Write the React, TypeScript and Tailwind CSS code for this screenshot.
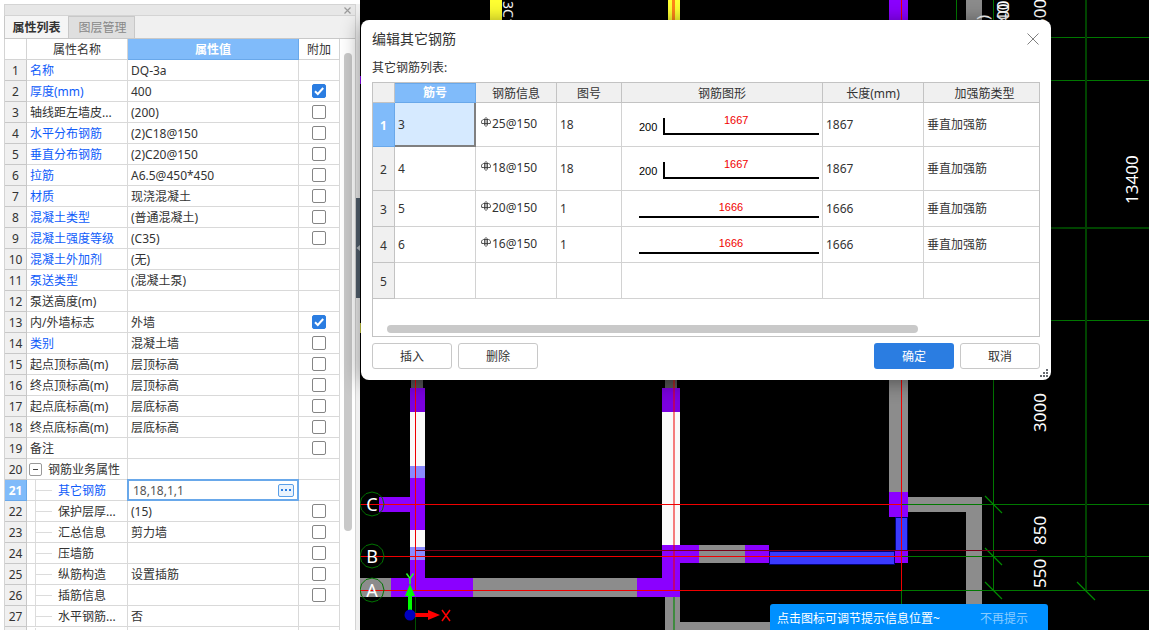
import React, { useState } from "react";

interface PropertyRow {
  name: string;
  value: string;
  blue?: boolean;
  check?: boolean;
  kind?: "group" | "child";
}

interface RebarRow {
  no: string;
  info: string;
  figure: string;
  bar?: number;
  hook?: number;
  length: string;
  type: string;
}

const properties: PropertyRow[] = [
  { name: "名称", value: "DQ-3a", blue: true },
  { name: "厚度(mm)", value: "400", blue: true, check: true },
  { name: "轴线距左墙皮...", value: "(200)", check: false },
  { name: "水平分布钢筋", value: "(2)C18@150", blue: true, check: false },
  { name: "垂直分布钢筋", value: "(2)C20@150", blue: true, check: false },
  { name: "拉筋", value: "A6.5@450*450", blue: true, check: false },
  { name: "材质", value: "现浇混凝土", blue: true, check: false },
  { name: "混凝土类型", value: "(普通混凝土)", blue: true, check: false },
  { name: "混凝土强度等级", value: "(C35)", blue: true, check: false },
  { name: "混凝土外加剂", value: "(无)", blue: true },
  { name: "泵送类型", value: "(混凝土泵)", blue: true },
  { name: "泵送高度(m)", value: "" },
  { name: "内/外墙标志", value: "外墙", check: true },
  { name: "类别", value: "混凝土墙", blue: true, check: false },
  { name: "起点顶标高(m)", value: "层顶标高", check: false },
  { name: "终点顶标高(m)", value: "层顶标高", check: false },
  { name: "起点底标高(m)", value: "层底标高", check: false },
  { name: "终点底标高(m)", value: "层底标高", check: false },
  { name: "备注", value: "", check: false },
  { name: "钢筋业务属性", value: "", kind: "group" },
  { name: "其它钢筋", value: "18,18,1,1", blue: true, kind: "child" },
  { name: "保护层厚...", value: "(15)", check: false, kind: "child" },
  { name: "汇总信息", value: "剪力墙", check: false, kind: "child" },
  { name: "压墙筋", value: "", check: false, kind: "child" },
  { name: "纵筋构造", value: "设置插筋", check: false, kind: "child" },
  { name: "插筋信息", value: "", check: false, kind: "child" },
  { name: "水平钢筋...", value: "否", kind: "child" },
];

const rebars: RebarRow[] = [
  { no: "3", info: "25@150", figure: "18", bar: 1667, hook: 200, length: "1867", type: "垂直加强筋" },
  { no: "4", info: "18@150", figure: "18", bar: 1667, hook: 200, length: "1867", type: "垂直加强筋" },
  { no: "5", info: "20@150", figure: "1", bar: 1666, length: "1666", type: "垂直加强筋" },
  { no: "6", info: "16@150", figure: "1", bar: 1666, length: "1666", type: "垂直加强筋" },
  { no: "", info: "", figure: "", length: "", type: "" },
];

const AttachBox = ({ label, initial }: { label: string; initial: boolean }) => {
  const [on, setOn] = useState(initial);
  return (
    <span className="grid place-items-center">
      <input
        type="checkbox"
        aria-label={label}
        checked={on}
        onChange={(e) => setOn(e.target.checked)}
        className="col-start-1 row-start-1 size-3.5 appearance-none rounded-[2px] border border-[#858585] bg-white checked:border-[#2b7de1] checked:bg-[#2b7de1]"
      />
      {on && (
        <svg viewBox="0 0 14 14" className="pointer-events-none col-start-1 row-start-1 size-3.5">
          <path d="M3 7.2l2.8 2.8L11.2 4" fill="none" stroke="#fff" strokeWidth="2" />
        </svg>
      )}
    </span>
  );
};

const PropertyName = ({ row }: { row: PropertyRow }) => {
  const color = row.blue ? "text-[#0f5cfa]" : "text-[#333]";
  if (row.kind === "group") {
    return (
      <div className="flex items-center gap-1.5 pl-0.5">
        <button type="button" aria-label="折叠" className="grid size-[13px] place-items-center rounded-[2px] border border-[#999] bg-white">
          <span className="h-px w-[5px] bg-[#444]" />
        </button>
        <span className={`pt-0.5 ${color}`}>{row.name}</span>
      </div>
    );
  }
  if (row.kind === "child") {
    return (
      <div className="flex h-5 items-center pl-2">
        <span className="h-full border-l border-[#dcdcdc]" />
        <span className="w-4 border-t border-[#dcdcdc]" />
        <span className={`pt-0.5 pl-1.5 ${color}`}>{row.name}</span>
      </div>
    );
  }
  return <div className={`pt-0.5 pl-[3px] ${color}`}>{row.name}</div>;
};

const PropertyPanel = () => {
  const [other, setOther] = useState("18,18,1,1");
  return (
    <aside className="flex h-full w-[360px] shrink-0 bg-white pt-1">
      <div className="flex min-w-0 flex-1 flex-col border-r border-[#d4d4d4] pl-1">
        <div className="flex h-3 shrink-0 items-center justify-end border-y border-l border-[#d4d4d4] bg-[#e7e7e7] pr-1">
          <button type="button" aria-label="关闭面板">
            <svg viewBox="0 0 7 7" className="size-[7px]">
              <path d="M0.5 0.5l6 6M6.5 0.5l-6 6" stroke="#9a9a9a" strokeWidth="1.2" />
            </svg>
          </button>
        </div>
        <div role="tablist" className="flex h-[23px] shrink-0 border-b border-[#c8c8c8] bg-[#f0f0f0]">
          <button type="button" role="tab" aria-selected="true" className="w-[65px] border-x border-[#c8c8c8] bg-[#f5f5f5] pt-0.5 font-bold text-[#333]">
            属性列表
          </button>
          <button type="button" role="tab" aria-selected="false" className="w-[66px] border-t border-r border-[#c8c8c8] bg-[#dfdfdf] pl-0.5 text-[#888]">
            图层管理
          </button>
        </div>
        <div className="flex min-h-0 flex-1 overflow-hidden border-l border-[#d4d4d4]">
          <div className="min-w-0 flex-1">
            <table className="w-full table-fixed border-separate border-spacing-0 whitespace-nowrap">
              <colgroup>
                <col className="w-[22px]" />
                <col className="w-[101px]" />
                <col />
                <col className="w-[41px]" />
              </colgroup>
              <thead>
                <tr className="h-[21px]">
                  <th className="border-r border-b border-[#d4d4d4] p-0" />
                  <th className="border-r border-b border-[#d4d4d4] p-0 pt-0.5 font-normal">属性名称</th>
                  <th className="border-r border-b border-[#69a8ea] bg-[#80bbfa] p-0 pt-0.5 text-white">属性值</th>
                  <th className="border-r border-b border-[#d4d4d4] p-0 pt-0.5 font-normal">附加</th>
                </tr>
              </thead>
              <tbody>
                {properties.map((row, i) => {
                  const active = i === 20;
                  return (
                    <tr key={i} className="h-[21px]">
                      <th
                        className={
                          active
                            ? "border-r border-b border-[#69a8ea] bg-[#80bbfa] p-0 pt-0.5 text-white"
                            : "border-r border-b border-[#c8c8c8] bg-[#f0f0f0] p-0 pt-0.5 font-normal"
                        }
                      >
                        {i + 1}
                      </th>
                      <td className="overflow-hidden border-r border-b border-[#d9d9d9] p-0">
                        <PropertyName row={row} />
                      </td>
                      <td className="border-r border-b border-[#d9d9d9] p-0">
                        {active ? (
                          <div className="flex h-5 items-center bg-white px-1 outline-2 -outline-offset-1 outline-[#69a8ea]">
                            <input
                              aria-label="其它钢筋"
                              value={other}
                              onChange={(e) => setOther(e.target.value)}
                              className="min-w-0 flex-1 pt-0.5 pl-px text-[#555] outline-none"
                            />
                            <button type="button" aria-label="编辑" className="flex h-[13px] w-4 items-center justify-center gap-0.5 rounded-[2px] border border-[#5a9fe8] bg-[#eaf3fd]">
                              <span className="size-0.5 bg-[#2b7de1]" />
                              <span className="size-0.5 bg-[#2b7de1]" />
                              <span className="size-0.5 bg-[#2b7de1]" />
                            </button>
                          </div>
                        ) : (
                          <div className="pt-0.5 pl-[3px]">{row.value}</div>
                        )}
                      </td>
                      <td className="border-r border-b border-[#d9d9d9] p-0">
                        {row.check !== undefined && <AttachBox label={`${row.name} 附加`} initial={row.check} />}
                      </td>
                    </tr>
                  );
                })}
                {/* blank row running off the bottom */}
                <tr className="h-[21px]">
                  <th className="border-r border-[#c8c8c8] bg-[#f0f0f0] p-0" />
                  <td className="border-r border-[#d9d9d9] p-0">
                    <PropertyName row={{ name: "", value: "", kind: "child" }} />
                  </td>
                  <td className="border-r border-[#d9d9d9] p-0" />
                  <td className="border-r border-[#d9d9d9] p-0" />
                </tr>
              </tbody>
            </table>
          </div>
          <div className="w-[15px] shrink-0 pt-3.5 pl-1">
            <div className="h-[478px] w-2 rounded-full bg-[#c9c9c9]" />
          </div>
        </div>
      </div>
      <div className="w-1 bg-[#f0f0f0] pt-[194px]">
        <button type="button" aria-label="收起面板" className="flex h-[100px] w-1 items-center bg-[#53616f]">
          <svg viewBox="0 0 4 6" className="h-1.5 w-1">
            <path d="M4 0v6L0.5 3z" fill="#b9c0c6" />
          </svg>
        </button>
      </div>
    </aside>
  );
};

const AxisBubble = ({ y, label }: { y: number; label: string }) => (
  <g>
    <polygon
      points="12,0 10.4,6 6,10.4 0,12 -6,10.4 -10.4,6 -12,0 -10.4,-6 -6,-10.4 0,-12 6,-10.4 10.4,-6"
      transform={`translate(372 ${y})`}
      fill="none"
      stroke="#007400"
    />
    <text x="372" y={y + 7} textAnchor="middle" fontSize="18" fill="#fff">
      {label}
    </text>
  </g>
);

const Dimension = ({ x, y, text }: { x: number; y: number; text: string }) => (
  <text transform={`translate(${x} ${y}) rotate(-90)`} fontSize="17" fill="#fff">
    {text}
  </text>
);

const Drawing = () => (
  <svg viewBox="360 0 789 630" preserveAspectRatio="xMinYMin slice" className="block h-full w-full font-[Noto_Sans,sans-serif]">
    {/* walls */}
    <g fill="#8c8c8c">
      <path d="M360 578h113v19H360zM473 578h165v19H473zM665 597h15v25h90v8H665z" />
      <path d="M699 545h46v18h-46zM889 380h19v112h-19zM908 497h74v133h-16V512h-58zM966 0h16v20h-16z" />
      <path d="M411 378h12v10h-12zM665 378h12v10h-12z" fill="#555" />
    </g>
    <g fill="#fafafa">
      <path d="M410 412h15v54h-15zM410 530h15v17h-15zM662 412h18v133h-18z" />
    </g>
    <path d="M410 466h15v12h-15zM410 547h15v13h-15z" fill="#8a8aff" />
    <g fill="#8b00ff">
      <path d="M410 388h15v24h-15zM662 388h18v24h-18z" fill="#7b00e0" />
      <path d="M410 478h15v52h-15v-18h-31v-15h31zM410 560h15v18h48v19h-82v-19h19z" />
      <path d="M662 545h37v18h-19v34h-43v-19h25zM745 545h24v18h-24zM889 492h19v25h-19zM889 0h19v20h-19z" />
    </g>
    <path d="M769.500 551.500h125v13h-125zM895.500 517.500h12v34h-12z" fill="#3a3aff" stroke="#00007c" />
    <path d="M895 551h13v12h-13z" fill="#8b00ff" />
    <path d="M490 0h12v20h-12zM668 0h12v20h-12z" fill="#ffff32" />
    <path d="M672 0h3v20h-3z" fill="#ff8519" />
    <path d="M360 76h1v8h-1z" fill="#8b00ff" />
    <path d="M360 323h1v10h-1z" fill="#c9c940" />

    {/* dimension grid */}
    <g stroke="#007800" fill="none">
      <path d="M956.500 0v20M993.500 0v590M901.500 590v40" />
      <path d="M1050 37.500h99M1050 80.500h99M1050 320.500h99" />
      <path d="M902 504.500h247M902 556.500h247M902 590.500h247" />
      <path d="M985 496l17 17M985 548l17 17M985 582l17 17M1077 582l18 18" stroke="#008c00" strokeWidth="1.200" />
      <path d="M1086 0v590M1050 228h99" stroke="#004400" strokeWidth="2" />
      <path d="M415.500 597v33" stroke="#005000" />
      <path d="M674 597v33" stroke="#3f8a3f" strokeWidth="2" />
    </g>

    {/* axes */}
    <g stroke="#f00000" fill="none">
      <path d="M360 504.500h542M360 556.500h542M360 590.500h542M901.500 380v211M901.500 0v20" />
      <path d="M415.500 380v210" />
      <path d="M674 380v211" strokeOpacity="0.500" strokeWidth="2" />
      <path d="M416 550.500h621" stroke="#780018" />
    </g>

    <AxisBubble y={504} label="C" />
    <AxisBubble y={556} label="B" />
    <AxisBubble y={590} label="A" />

    <Dimension x={1046} y={432} text="3000" />
    <Dimension x={1046} y={545} text="850" />
    <Dimension x={1046} y={588} text="550" />
    <Dimension x={1138} y={204} text="13400" />
    <Dimension x={1046} y={28} text="300" />
    <Dimension x={1009} y={20} text="00" />
    <Dimension x={1009} y={23} text="40" />
    <Dimension x={989} y={20} text=")" />
    <text transform="translate(503 1) rotate(90)" fontSize="14" fill="#fff">
      3C1
    </text>

    {/* origin marker */}
    <path d="M408 595h4v15h-4zM405 596l5-12 5 12z" fill="#0f0" />
    <path d="M415 613h14v4h-14zM428 610l12 5-12 5z" fill="#f00" />
    <circle cx="410" cy="615" r="5.500" fill="#0000c0" />
    <path d="M406.500 573.500l3.500 5 3.500-5M410 578v6" stroke="#2f2" strokeWidth="1.500" fill="none" />
    <path d="M442 610l8 11M450 610l-8 11" stroke="#f00" strokeWidth="1.500" />
  </svg>
);

const RebarSymbol = () => (
  <svg viewBox="0 0 10 10" className="size-2.5" fill="none" stroke="#333">
    <path d="M5 0v10M3.500 1.500v7M6.500 1.500v7M0.500 6.500h9M2.500 2.500h5" strokeWidth="0.800" />
    <path d="M2.500 2.500C1 3 0.500 4 0.500 5s0.500 1.300 1 1.500M7.500 2.500C9 3 9.500 4 9.500 5s-0.500 1.300-1 1.500" strokeWidth="0.900" />
  </svg>
);

const BarFigure = ({ bar, hook }: { bar: number; hook?: number }) => {
  if (hook) {
    return (
      <div className="flex items-center gap-1.5 pt-1 pr-[3px] pl-[17px] font-[Liberation_Sans,sans-serif] text-[11px] text-black">
        <span>{hook}</span>
        <span className="h-[17px] flex-1 border-b-2 border-l-2 border-black text-center leading-[11px] text-[#f00000]">
          <span className="-mt-[3px] block pr-3">{bar}</span>
        </span>
      </div>
    );
  }
  return (
    <div className="pr-[3px] pl-[17px] font-[Liberation_Sans,sans-serif]">
      <div className="border-b-2 border-black pb-px pl-1 text-center text-[11px] leading-4 text-[#f00000]">{bar}</div>
    </div>
  );
};

const headCell = "border-r border-b border-[#c3c3c3] bg-[#f0f0f0] p-0 pt-0.5 font-normal";
const bodyCell = "border-r border-b border-[#d2d2d2] p-0";

const RebarDialog = () => (
  <section
    role="dialog"
    aria-label="编辑其它钢筋"
    className="absolute top-5 left-px flex h-[360px] w-[690px] flex-col rounded-lg bg-white px-[11px] pt-2.5 shadow-[0_2px_20px_rgba(0,0,0,0.45)]"
  >
    <header className="flex items-center justify-between pr-px">
      <h2 className="text-sm leading-[18px] text-[#333]">编辑其它钢筋</h2>
      <button type="button" aria-label="关闭">
        <svg viewBox="0 0 12 12" className="size-3">
          <path d="M0.500 0.500l11 11M11.500 0.500l-11 11" stroke="#808080" />
        </svg>
      </button>
    </header>
    <p className="pt-3 pb-1.5 leading-4">其它钢筋列表:</p>
    <div className="flex h-[255px] flex-col justify-between border border-[#c3c3c3] text-[12px]">
      <table className="w-full table-fixed border-separate border-spacing-0 whitespace-nowrap">
        <colgroup>
          <col className="w-[22px]" />
          <col className="w-[81px]" />
          <col className="w-[81px]" />
          <col className="w-[65px]" />
          <col />
          <col className="w-[101px]" />
          <col className="w-[115px]" />
        </colgroup>
        <thead>
          <tr className="h-5">
            <th className={headCell} />
            <th className="border border-l-0 border-[#69a8ea] bg-[#80bbfa] p-0 text-white">筋号</th>
            <th className={headCell}>钢筋信息</th>
            <th className={headCell}>图号</th>
            <th className={headCell}>钢筋图形</th>
            <th className={headCell}>长度(mm)</th>
            <th className="border-b border-[#c3c3c3] bg-[#f0f0f0] p-0 pt-0.5 pl-1.5 font-normal">加强筋类型</th>
          </tr>
        </thead>
        <tbody>
          {rebars.map((r, i) => (
            <tr key={i} className={i < 2 ? "h-11" : "h-9"}>
              <th className={i === 0 ? "border-r border-b border-[#69a8ea] bg-[#80bbfa] p-0 pt-0.5 text-white" : headCell}>{i + 1}</th>
              <td className={i === 0 ? "border-r-2 border-b-2 border-[#808080] bg-[#d6eaff] p-0 pt-px" : bodyCell}>
                <span className="pl-[3px]">{r.no}</span>
              </td>
              <td className={bodyCell}>
                {r.info && (
                  <span className="flex items-center gap-px pb-0.5 pl-[5px]">
                    <span className="pb-1">
                      <RebarSymbol />
                    </span>
                    {r.info}
                  </span>
                )}
              </td>
              <td className={bodyCell}>
                <span className="pl-[3px]">{r.figure}</span>
              </td>
              <td className={bodyCell}>{r.bar && <BarFigure bar={r.bar} hook={r.hook} />}</td>
              <td className={bodyCell}>
                <span className="pl-[3px]">{r.length}</span>
              </td>
              <td className="border-b border-[#d2d2d2] p-0">
                <span className="pl-[3px]">{r.type}</span>
              </td>
            </tr>
          ))}
        </tbody>
      </table>
      <div className="pr-[121px] pb-[3px] pl-3.5">
        <div className="h-2 rounded-full bg-[#c9c9c9]" />
      </div>
    </div>
    <footer className="flex gap-1.5 pt-1.5">
      <button type="button" className="h-[26px] w-20 rounded-[3px] border border-[#c8c8c8] pt-0.5">插入</button>
      <button type="button" className="h-[26px] w-20 rounded-[3px] border border-[#c8c8c8] pt-0.5">删除</button>
      <button type="button" className="ml-auto h-[26px] w-20 rounded-[3px] bg-[#2b7de1] pt-0.5 text-white">确定</button>
      <button type="button" className="h-[26px] w-20 rounded-[3px] border border-[#c8c8c8] pt-0.5">取消</button>
    </footer>
    <svg viewBox="0 0 8 8" className="absolute right-[3px] bottom-[3px] size-2" fill="#666a70">
      <path d="M6 0h2v2H6zM3 3h2v2H3zM6 3h2v2H6zM0 6h2v2H0zM3 6h2v2H3zM6 6h2v2H6z" />
    </svg>
  </section>
);

const App: React.FC = () => {
  return (
    <div className="flex h-screen overflow-hidden bg-black font-[Noto_Sans,Noto_Sans_CJK_SC,sans-serif] text-[12px] leading-4 text-[#333]">
      <PropertyPanel />
      <main className="relative min-w-0 flex-1">
        <Drawing />
        <RebarDialog />
        {/* hint bar */}
        <div className="absolute bottom-0 left-[410px] flex h-[26px] w-[278px] items-center justify-between rounded-t-[3px] bg-[#0090ff] pt-1 pr-5 pl-[7px] text-white">
          <span>点击图标可调节提示信息位置~</span>
          <button type="button" className="text-[#8accff]">不再提示</button>
        </div>
      </main>
    </div>
  );
};

export default App;
